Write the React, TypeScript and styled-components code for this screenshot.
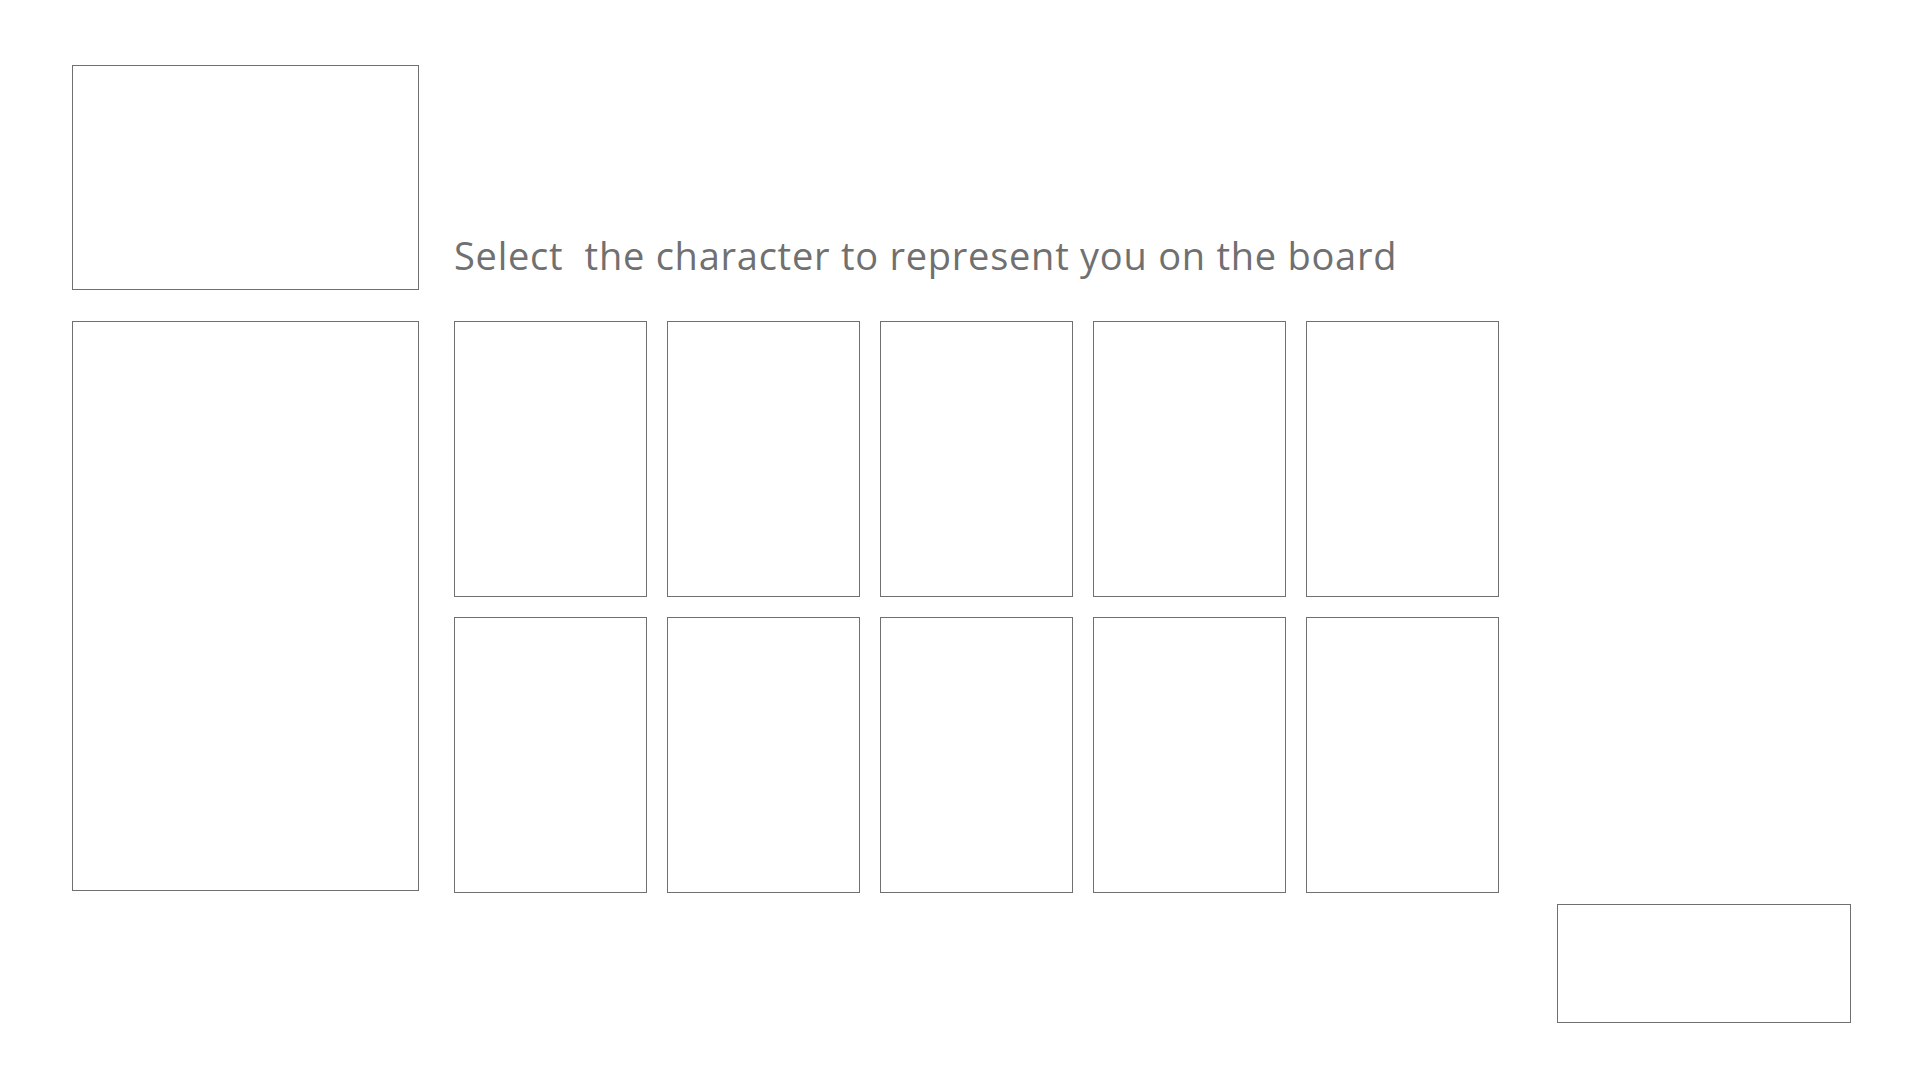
import React from "react";
import styled, { createGlobalStyle } from "styled-components";

const GlobalStyle = createGlobalStyle`
  html, body {
    margin: 0;
    padding: 0;
    background: #ffffff;
  }
  body {
    font-family: "Open Sans", "Lato", sans-serif;
  }
`;

const Page = styled.div`
  width: 1920px;
  height: 1080px;
  box-sizing: border-box;
  padding: 65px 0 0 72px;
  display: flex;
  flex-direction: column;
`;

const TopRow = styled.div`
  display: flex;
  align-items: flex-end;
  gap: 35px;
`;

const MiddleRow = styled.div`
  display: flex;
  align-items: flex-start;
  gap: 35px;
  margin-top: 31px;
`;

const BottomRow = styled.div`
  display: flex;
  margin-top: 11px;
  padding-left: 1485px;
`;

const Frame = styled.div<{ $w: number; $h: number }>`
  box-sizing: border-box;
  width: ${(p) => p.$w}px;
  height: ${(p) => p.$h}px;
  border: 1px solid #707070;
  background: #ffffff;
  flex: none;
`;

const Heading = styled.h1`
  margin: 0 0 16px 0;
  font-family: "Open Sans", "Lato", sans-serif;
  font-weight: 400;
  font-size: 38px;
  line-height: 38px;
  color: #707070;
  white-space: pre;
  letter-spacing: 0.75px;
`;

const TileGrid = styled.div`
  display: grid;
  grid-template-columns: repeat(5, 193px);
  grid-auto-rows: 276px;
  column-gap: 20px;
  row-gap: 20px;
`;

const Tile = styled.button`
  box-sizing: border-box;
  border: 1px solid #707070;
  background: #ffffff;
  padding: 0;
  margin: 0;
  cursor: pointer;
`;

export default function App() {
  const tiles = Array.from({ length: 10 }, (_, i) => i);
  return (
    <>
      <GlobalStyle />
      <Page>
        <TopRow>
          <Frame $w={347} $h={225} />
          <Heading>{"Select  the character to represent you on the board"}</Heading>
        </TopRow>
        <MiddleRow>
          <Frame $w={347} $h={570} />
          <TileGrid>
            {tiles.map((i) => (
              <Tile key={i} aria-label={`character ${i + 1}`} />
            ))}
          </TileGrid>
        </MiddleRow>
        <BottomRow>
          <Frame $w={294} $h={119} />
        </BottomRow>
      </Page>
    </>
  );
}
